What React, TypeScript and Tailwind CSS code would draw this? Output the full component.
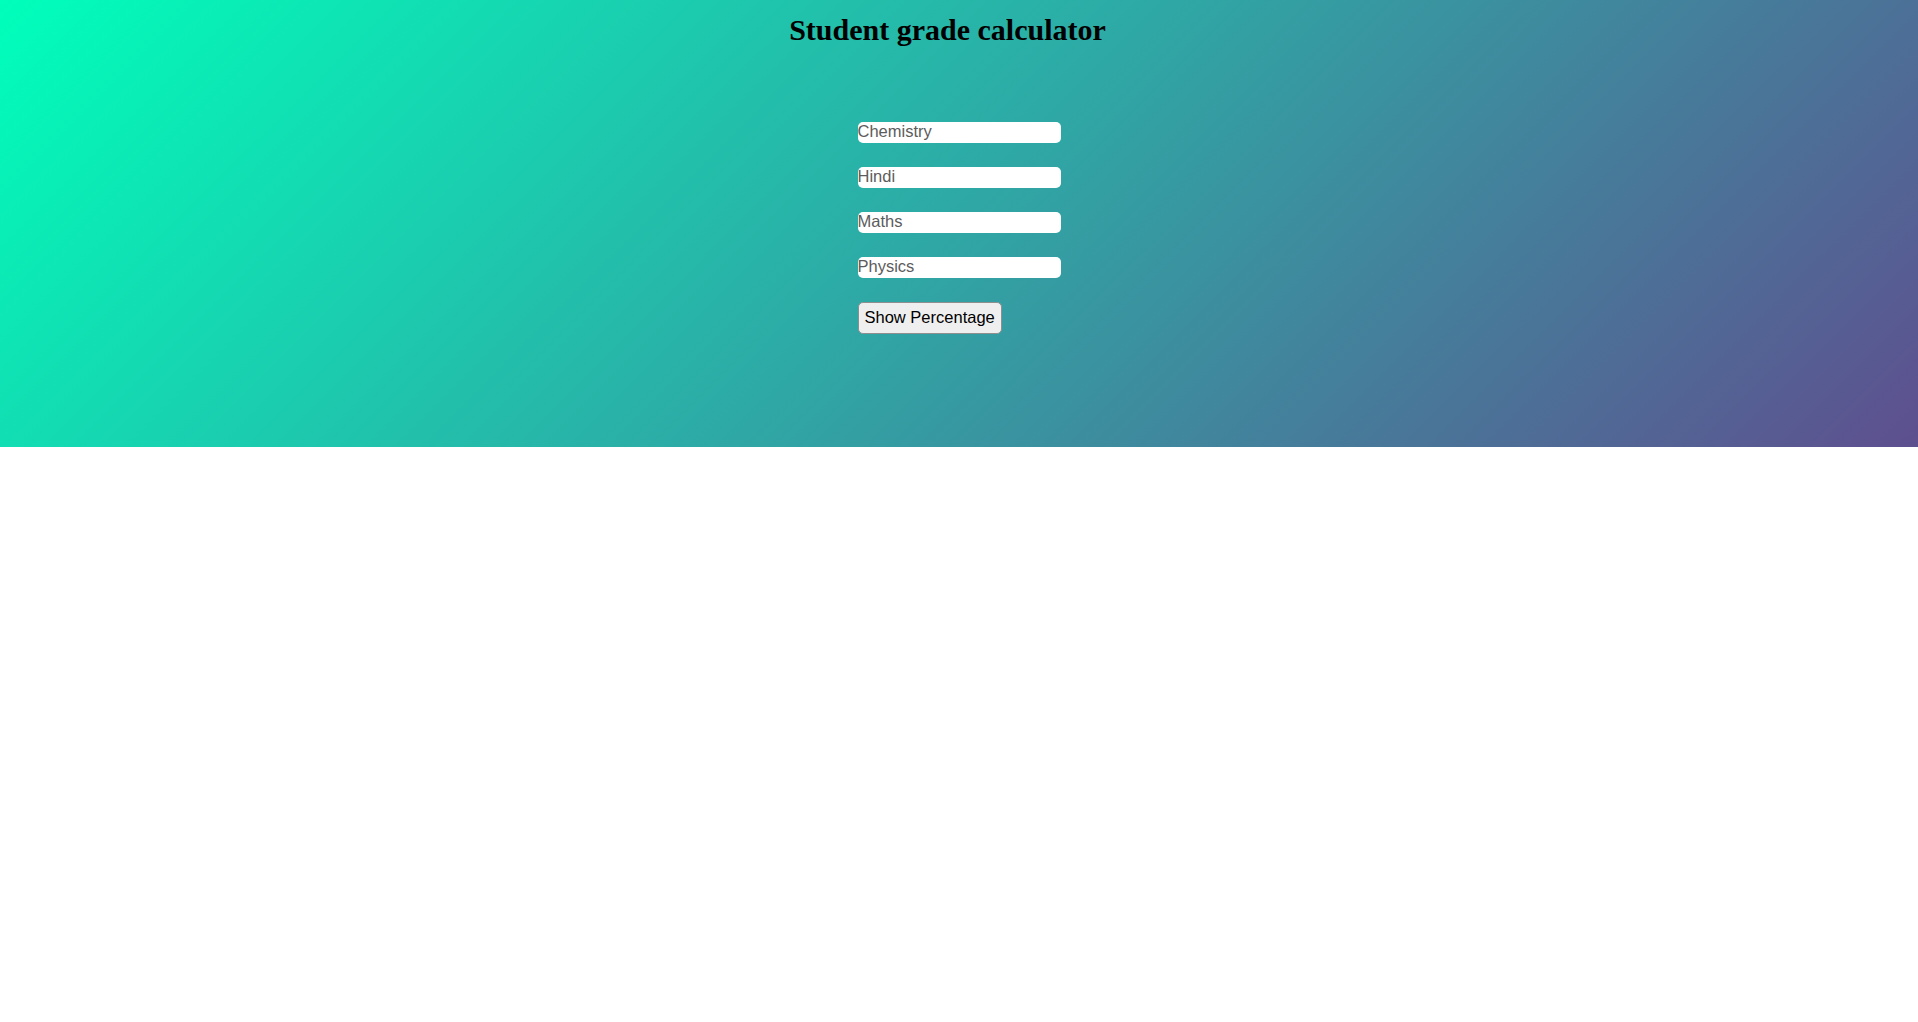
import React from 'react';

const subjects = ['Chemistry', 'Hindi', 'Maths', 'Physics'];

const App: React.FC = () => {
  return (
    <div className="min-h-[1022px] bg-white">
      <div className="h-[447px] bg-[linear-gradient(135deg,#00ffbb,#5e4f8f)]">
        <h1 className="pt-[11px] pr-[23px] text-center text-[30px] font-bold leading-[37px] text-black font-['Liberation_Serif',serif]">
          Student grade calculator
        </h1>
        <form
          className="mx-auto mt-[74px] flex w-[203px] flex-col gap-[24px] font-['Liberation_Sans',Arial,sans-serif]"
          onSubmit={(e) => e.preventDefault()}
        >
          {subjects.map((s) => (
            <input
              key={s}
              type="text"
              placeholder={s}
              className="h-[21px] w-full rounded-[5px] border-0 bg-white px-0 pt-0 pb-[2px] text-[16.5px] leading-[19px] text-black outline-none placeholder:text-[#5c5c5c]"
            />
          ))}
          <button
            type="submit"
            className="h-[32px] w-[144px] whitespace-nowrap rounded-[5px] border border-[#8f8f8f] bg-[#efefef] px-[6px] pt-0 pb-[2px] text-left text-[16.5px] text-black"
          >
            Show Percentage
          </button>
        </form>
      </div>
    </div>
  );
};

export default App;
